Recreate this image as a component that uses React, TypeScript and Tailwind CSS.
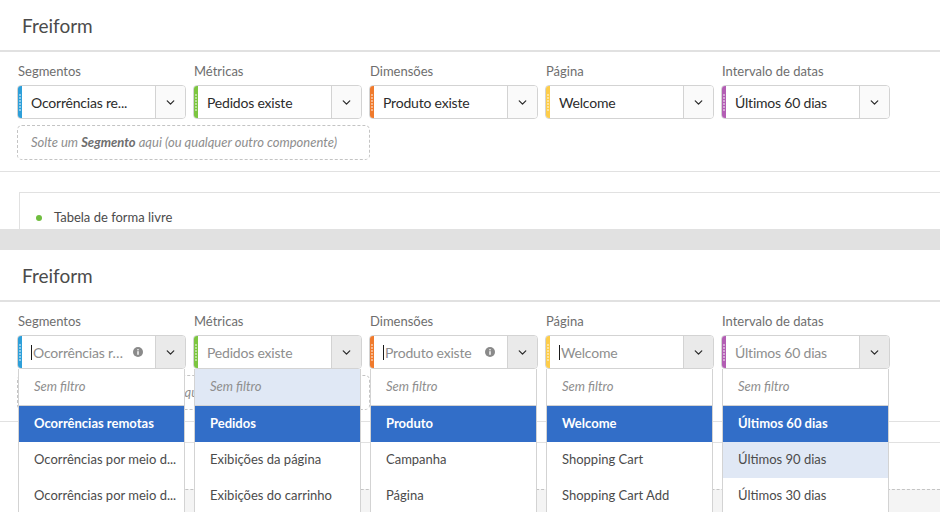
import { ChevronDown } from 'lucide-react'

type Field = {
  label: string
  value: string
  strip: string
  info?: boolean
  caret?: boolean
  items: { text: string; state?: 'selected' | 'hover' }[]
  semHover?: boolean
}

const fields: Field[] = [
  {
    label: 'Segmentos',
    value: 'Ocorrências re...',
    strip: 'bg-[#2d9fd9]',
    info: true,
    caret: true,
    items: [
      { text: 'Ocorrências remotas', state: 'selected' },
      { text: 'Ocorrências por meio d...' },
      { text: 'Ocorrências por meio d...' },
    ],
  },
  {
    label: 'Métricas',
    value: 'Pedidos existe',
    strip: 'bg-[#7cc540]',
    semHover: true,
    items: [
      { text: 'Pedidos', state: 'selected' },
      { text: 'Exibições da página' },
      { text: 'Exibições do carrinho' },
    ],
  },
  {
    label: 'Dimensões',
    value: 'Produto existe',
    strip: 'bg-[#f07a2c]',
    info: true,
    caret: true,
    items: [
      { text: 'Produto', state: 'selected' },
      { text: 'Campanha' },
      { text: 'Página' },
    ],
  },
  {
    label: 'Página',
    value: 'Welcome',
    strip: 'bg-[#fdcd4a]',
    caret: true,
    items: [
      { text: 'Welcome', state: 'selected' },
      { text: 'Shopping Cart' },
      { text: 'Shopping Cart Add' },
    ],
  },
  {
    label: 'Intervalo de datas',
    value: 'Últimos 60 dias',
    strip: 'bg-[#b35eb4]',
    items: [
      { text: 'Últimos 60 dias', state: 'selected' },
      { text: 'Últimos 90 dias', state: 'hover' },
      { text: 'Últimos 30 dias' },
    ],
  },
]

function InfoIcon() {
  return (
    <svg width="10" height="10" viewBox="0 0 10 10" className="ml-[4px] shrink-0">
      <circle cx="5" cy="5" r="5" fill="#8a8a8a" />
      <rect x="4.3" y="4.2" width="1.4" height="3.6" fill="#fff" />
      <circle cx="5" cy="2.8" r="0.8" fill="#fff" />
    </svg>
  )
}

function Select({ field, open }: { field: Field; open: boolean }) {
  return (
    <div className="relative">
      <div className="flex h-[34px] overflow-hidden rounded-[4px] border border-[#d3d3d3] bg-white">
        {/* colour grip */}
        <div className={`flex w-[4px] shrink-0 flex-col items-center justify-center gap-[1px] ${field.strip}`}>
          {[0, 1, 2, 3, 4, 5].map((d) => (
            <span key={d} className="h-[2px] w-[2px] rounded-full bg-white/60" />
          ))}
        </div>
        <div className="flex min-w-0 flex-1 items-center pl-[9px] pr-[12px]">
          {open && field.caret && <span className="mr-px h-[15px] w-px shrink-0 bg-[#1a1a1a]" />}
          <span
            className={`flex-1 truncate text-[14px] tracking-[-0.2px] ${open ? 'text-[#8e8e8e]' : 'text-[#2c2c2c]'}`}
          >
            {field.value}
          </span>
          {open && field.info && <InfoIcon />}
        </div>
        <div
          className={`flex w-[30px] shrink-0 items-center justify-center border-l border-[#d3d3d3] ${
            open ? 'bg-[#eaeaea]' : 'bg-[#fafafa]'
          }`}
        >
          <ChevronDown size={13} strokeWidth={2.4} className="text-[#2c2c2c]" />
        </div>
      </div>

      {/* open menu */}
      {open && (
        <div className="absolute left-px right-px top-full z-10 border-x border-[#d3d3d3] bg-white text-[13px]">
          <div
            className={`flex h-[37px] items-center border-b border-[#d3d3d3] pl-[15px] italic text-[#8e8e8e] ${
              field.semHover ? 'bg-[#e0e8f5]' : ''
            }`}
          >
            Sem filtro
          </div>
          {field.items.map((item, i) => (
            <div
              key={i}
              className={`flex h-[36px] items-center pl-[15px] ${
                item.state === 'selected'
                  ? 'bg-[#326ec8] font-bold text-white'
                  : item.state === 'hover'
                    ? 'bg-[#e0e8f5] text-[#4b4b4b]'
                    : 'text-[#4b4b4b]'
              }`}
            >
              {item.text}
            </div>
          ))}
        </div>
      )}
    </div>
  )
}

function Panel({ open }: { open: boolean }) {
  return (
    <div className={`relative overflow-hidden bg-white ${open ? 'h-[262px]' : 'h-[229px]'}`}>
      {/* Title */}
      <div className="flex h-[52px] items-center border-b-2 border-[#e1e1e1] pl-[22px] pt-[3px] text-[19px] text-[#4b4b4b]">
        Freiform
      </div>

      {/* Filter bar */}
      <div className="border-b border-[#e1e1e1] px-[17px] pb-[11px] pt-[10px]">
        <div className="flex gap-[7px]">
          {fields.map((f) => (
            <div key={f.label} className="w-[169px]">
              <div className="mb-[4px] h-[19px] pl-px text-[13px] leading-[19px] text-[#6e6e6e]">{f.label}</div>
              <Select field={f} open={open} />
            </div>
          ))}
        </div>
        <div className="mt-[6px] flex h-[35px] w-[353px] items-center rounded-[5px] border border-dashed border-[#c4c4c4] pl-[13px] text-[13px] italic text-[#8e8e8e]">
          Solte um&nbsp;<b className="text-[#6e6e6e]">Segmento</b>&nbsp;aqui (ou qualquer outro componente)
        </div>
      </div>

      {/* Freeform table */}
      <div className="ml-[19px] mt-[20px] border-l border-t border-[#e1e1e1]">
        <div className="flex h-[46px] items-center pl-[16px] pt-[4px] text-[13px] text-[#4b4b4b]">
          <span className="mr-[12px] h-[6px] w-[6px] rounded-full bg-[#6fbd3e]" />
          Tabela de forma livre
        </div>
        <div className="h-[40px] border-t border-dashed border-[#c4c4c4] bg-[#f4f4f4]" />
      </div>
    </div>
  )
}

export default function App() {
  return (
    <div className="h-[512px] w-[940px] overflow-hidden bg-white font-['Lato','Noto_Sans',sans-serif]">
      <Panel open={false} />
      <div className="h-[21px] bg-[#e1e1e1]" />
      <Panel open />
    </div>
  )
}
